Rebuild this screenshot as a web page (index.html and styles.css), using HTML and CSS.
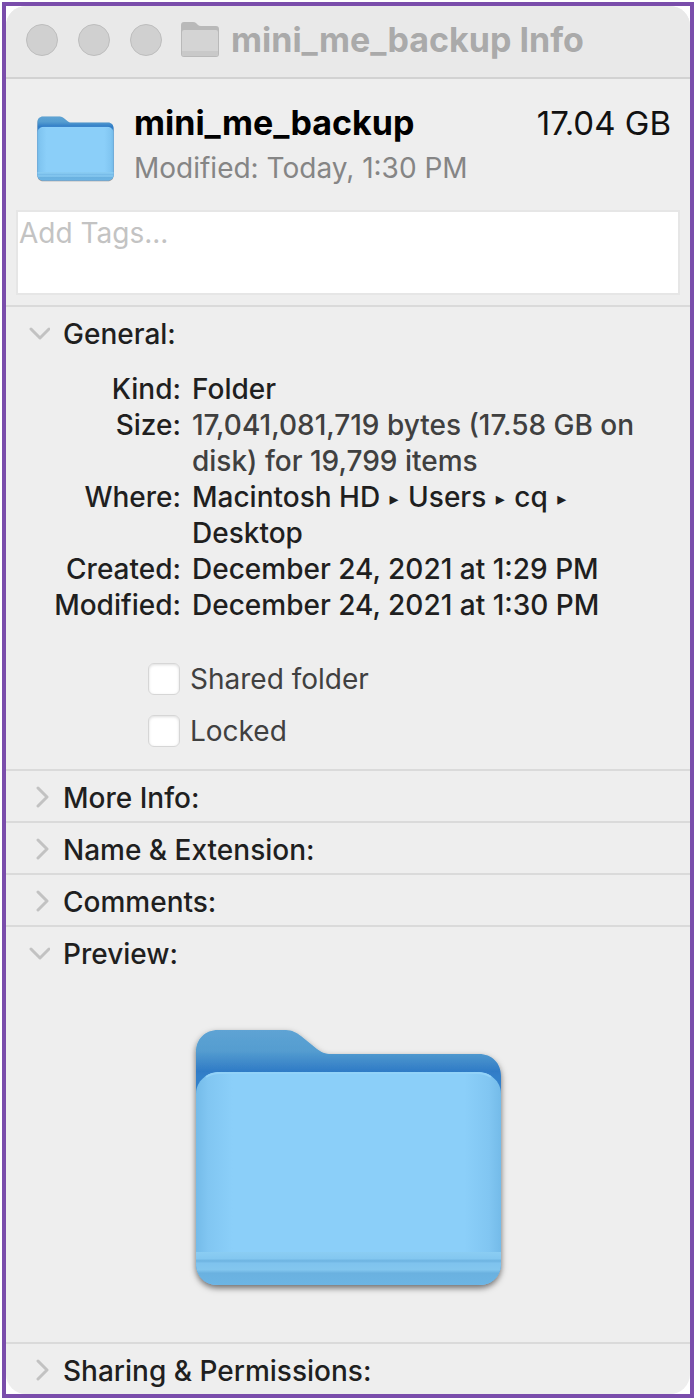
FILE: index.html
```html
<!DOCTYPE html>
<html lang="en">
<head>
  <meta charset="UTF-8">
  <meta name="viewport" content="width=device-width, initial-scale=1">
  <title>mini_me_backup Info</title>
  <link rel="stylesheet" href="styles.css">
</head>
<body>
  <!-- shared icons -->
  <svg class="defs" width="0" height="0" aria-hidden="true">
    <defs>
      <linearGradient id="back" gradientUnits="userSpaceOnUse" x1="0" y1="10" x2="0" y2="56">
        <stop offset="0" stop-color="#5ea3d4"/>
        <stop offset="0.45" stop-color="#559dd0"/>
        <stop offset="0.9" stop-color="#2f7bc6"/>
        <stop offset="1" stop-color="#3380ca"/>
      </linearGradient>
      <linearGradient id="front" x1="0" y1="0" x2="1" y2="0">
        <stop offset="0" stop-color="#74bbe9"/>
        <stop offset="0.04" stop-color="#81c6f2"/>
        <stop offset="0.12" stop-color="#8bcff9"/>
        <stop offset="0.88" stop-color="#8bcff9"/>
        <stop offset="0.96" stop-color="#81c6f2"/>
        <stop offset="1" stop-color="#74bbe9"/>
      </linearGradient>
      <linearGradient id="gloss" gradientUnits="userSpaceOnUse" x1="0" y1="232" x2="0" y2="265">
        <stop offset="0" stop-color="#8bcdf3"/>
        <stop offset="0.2" stop-color="#83c7f0"/>
        <stop offset="0.27" stop-color="#6db3e1"/>
        <stop offset="0.34" stop-color="#7fc3ee"/>
        <stop offset="0.54" stop-color="#83c6ee"/>
        <stop offset="0.64" stop-color="#6ab1e0"/>
        <stop offset="1" stop-color="#6cb5e4"/>
      </linearGradient>
      <filter id="drop" x="-10%" y="-10%" width="120%" height="120%">
        <feDropShadow dx="0" dy="3" stdDeviation="3" flood-color="#000" flood-opacity="0.55"/>
      </filter>
      <symbol id="folder" viewBox="0 0 325 280">
        <g filter="url(#drop)">
          <path fill="url(#back)" d="M10 32C10 19 19 10 32 10H100C106 10 111 13 115 16L131 29C135 32 139 34 146 34H293C306 34 315 43 315 56V243C315 256 306 265 293 265H32C19 265 10 256 10 243Z"/>
        </g>
        <path fill="url(#front)" d="M10 74C10 61 21 52 34 52H291C304 52 315 61 315 74V243C315 256 306 265 293 265H32C19 265 10 256 10 243Z"/>
        <path fill="url(#gloss)" d="M10 232H315V243C315 256 306 265 293 265H32C19 265 10 256 10 243Z"/>
        <path fill="none" stroke="#92d2f8" stroke-width="2" d="M20 57C24 54 28 53 34 53H291C297 53 301 54 305 57"/>
      </symbol>
    </defs>
  </svg>

  <main class="window">
    <header class="titlebar">
      <div class="lights">
        <button type="button" aria-label="Close"></button>
        <button type="button" aria-label="Minimize"></button>
        <button type="button" aria-label="Zoom"></button>
      </div>
      <svg class="title-icon" viewBox="0 0 38 36" aria-hidden="true">
        <path fill="#b9b9b9" d="M0 3Q0 0 3 0H12Q14 0 15 1L17 3Q18 4 20 4H35Q38 4 38 7V32Q38 35 35 35H3Q0 35 0 32Z"/>
        <path fill="#d4d4d4" d="M1 10Q1 8 3 8H35Q37 8 37 10V32Q37 34 35 34H3Q1 34 1 32Z"/>
        <path fill="#c9c9c9" d="M1 29H37V32Q37 34 35 34H3Q1 34 1 32Z"/>
      </svg>
      <h1>mini_me_backup Info</h1>
    </header>

    <section class="summary">
      <svg class="folder-small" aria-hidden="true"><use href="#folder"/></svg>
      <div class="summary-text">
        <div class="name-row">
          <h2>mini_me_backup</h2>
          <span class="size">17.04 GB</span>
        </div>
        <p>Modified: Today, 1:30 PM</p>
      </div>
    </section>

    <textarea class="tags" placeholder="Add Tags..." aria-label="Tags"></textarea>

    <details class="panel" open>
      <summary><svg class="chevron" viewBox="0 0 24 24"><path d="M5 7L14 16L23 7"/></svg>General:</summary>
      <dl class="info">
        <dt>Kind:</dt>
        <dd>Folder</dd>
        <dt>Size:</dt>
        <dd class="soft">17,041,081,719 bytes (17.58 GB on disk) for 19,799 items</dd>
        <dt>Where:</dt>
        <dd>Macintosh HD <span class="arrow">▸</span> Users <span class="arrow">▸</span> cq <span class="arrow">▸</span> Desktop</dd>
        <dt>Created:</dt>
        <dd>December 24, 2021 at 1:29 PM</dd>
        <dt>Modified:</dt>
        <dd>December 24, 2021 at 1:30 PM</dd>
      </dl>
      <div class="checks">
        <label><input type="checkbox">Shared folder</label>
        <label><input type="checkbox">Locked</label>
      </div>
    </details>

    <details class="panel">
      <summary><svg class="chevron" viewBox="0 0 24 24"><path d="M12 2L21 11L12 20"/></svg>More Info:</summary>
    </details>
    <details class="panel">
      <summary><svg class="chevron" viewBox="0 0 24 24"><path d="M12 2L21 11L12 20"/></svg>Name &amp; Extension:</summary>
    </details>
    <details class="panel">
      <summary><svg class="chevron" viewBox="0 0 24 24"><path d="M12 2L21 11L12 20"/></svg>Comments:</summary>
    </details>

    <details class="panel" open>
      <summary><svg class="chevron" viewBox="0 0 24 24"><path d="M5 7L14 16L23 7"/></svg>Preview:</summary>
      <div class="preview">
        <svg class="folder-large" role="img" aria-label="Folder"><use href="#folder"/></svg>
      </div>
    </details>

    <details class="panel">
      <summary><svg class="chevron" viewBox="0 0 24 24"><path d="M12 2L21 11L12 20"/></svg>Sharing &amp; Permissions:</summary>
    </details>
  </main>
</body>
</html>
```
FILE: styles.css
```css
* {
  box-sizing: border-box;
}
body {
  margin: 2px;
  border: 4px solid #7a4dab;
  background: #fff;
  font-family: Inter, "Liberation Sans", sans-serif;
  font-size: 28px;
  line-height: 36px;
  color: #1f1f1f;
}
h1, h2, p, dl, dd {
  margin: 0;
}
.defs {
  display: block;
}
.window {
  background: #eee;
  border-radius: 20px;
  overflow: hidden;
}

/* title bar */
.titlebar {
  display: flex;
  align-items: center;
  height: 73px;
  padding: 0 20px 4px;
  background: #e9e9e9;
  border-bottom: 2px solid #d2d2d2;
}
.lights {
  display: flex;
  gap: 20px;
}
.lights button {
  width: 32px;
  height: 32px;
  padding: 0;
  border: 1px solid #bdbdbd;
  border-radius: 50%;
  background: #d0d0d0;
}
.title-icon {
  width: 38px;
  height: 36px;
  margin: 0 12px 0 19px;
}
h1 {
  font-size: 34px;
  font-weight: 700;
  color: #aaa;
}

/* name, size and date */
.summary {
  display: flex;
  gap: 18px;
  padding: 23px 19px 21px 29px;
}
.folder-small {
  width: 81px;
  height: 80px;
  flex: none;
  margin-top: 7px;
}
.summary-text {
  flex: 1;
}
.name-row {
  display: flex;
  justify-content: space-between;
  font-size: 33px;
  line-height: 42px;
  color: #111;
}
h2 {
  font-size: 34px;
  font-weight: 700;
  color: #000;
}
.summary p {
  margin-top: 6px;
  color: #858585;
}

.tags {
  display: block;
  width: calc(100% - 20px);
  height: 85px;
  margin: 0 10px 10px;
  padding: 3px 1px;
  border: 2px solid #e6e6e6;
  background: #fff;
  font: inherit;
  resize: none;
}
.tags::placeholder {
  color: #c3c3c3;
}

/* sections */
.panel {
  border-top: 2px solid #dadada;
}
.panel summary {
  display: flex;
  align-items: center;
  height: 50px;
  padding: 3px 20px 0;
  font-weight: 500;
  list-style: none;
}
.chevron {
  width: 24px;
  height: 24px;
  margin-right: 13px;
  fill: none;
  stroke: #c2c2c2;
  stroke-width: 3;
  stroke-linecap: round;
  stroke-linejoin: round;
}
.info {
  display: grid;
  grid-template-columns: 175px 1fr;
  column-gap: 11px;
  padding: 14px 30px 0 0;
  font-weight: 500;
}
.info dt {
  text-align: right;
}
.info .soft {
  color: #404040;
}
.arrow {
  margin: 0 2px;
  font-family: "DejaVu Sans", sans-serif;
  font-size: 18px;
  line-height: 18px;
  vertical-align: 2px;
}
.checks {
  display: flex;
  flex-direction: column;
  gap: 16px;
  padding: 38px 20px 20px 142px;
  color: #404040;
}
.checks label {
  display: flex;
  align-items: center;
  gap: 10px;
}
.checks input {
  appearance: none;
  width: 32px;
  height: 32px;
  margin: 0;
  border: 1px solid #d6d6d6;
  border-radius: 6px;
  background: #fff;
  box-shadow: inset 0 1px 3px #ddd;
}
.preview {
  display: flex;
  justify-content: center;
  padding: 43px 0 42px;
}
.folder-large {
  width: 325px;
  height: 280px;
}
```
